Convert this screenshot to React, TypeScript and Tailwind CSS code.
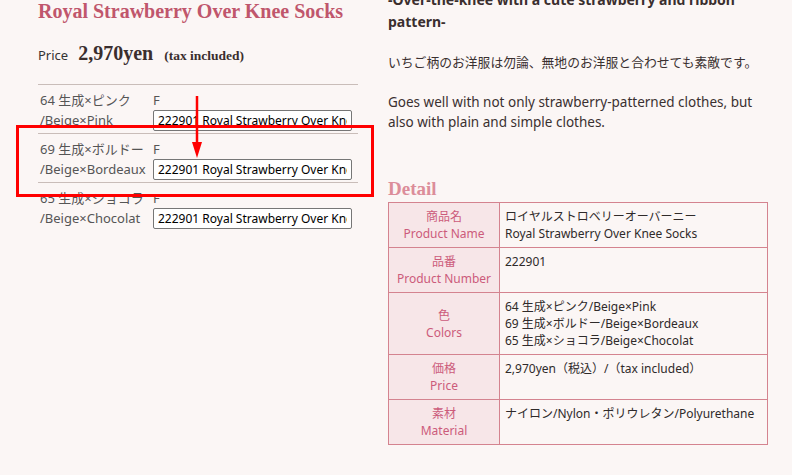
import React from 'react';

const variants = [
  { jp: '64 生成×ピンク', en: '/Beige×Pink' },
  { jp: '69 生成×ボルドー', en: '/Beige×Bordeaux' },
  { jp: '65 生成×ショコラ', en: '/Beige×Chocolat' },
];

const details: { jp: string; en: string; lines: string[] }[] = [
  { jp: '商品名', en: 'Product Name', lines: ['ロイヤルストロベリーオーバーニー', 'Royal Strawberry Over Knee Socks'] },
  { jp: '品番', en: 'Product Number', lines: ['222901'] },
  {
    jp: '色',
    en: 'Colors',
    lines: ['64 生成×ピンク/Beige×Pink', '69 生成×ボルドー/Beige×Bordeaux', '65 生成×ショコラ/Beige×Chocolat'],
  },
  { jp: '価格', en: 'Price', lines: ['2,970yen（税込）/（tax included）'] },
  { jp: '素材', en: 'Material', lines: ['ナイロン/Nylon・ポリウレタン/Polyurethane'] },
];

const sans = "font-['Noto_Sans','Noto_Sans_CJK_JP',sans-serif]";
const serif = "font-['Liberation_Serif','Noto_Sans_CJK_JP',serif]";

const App: React.FC = () => {
  return (
    <div className={`w-[792px] h-[475px] overflow-hidden bg-[#fbf6f5] text-[#3a3030] ${sans}`}>
      <div className="flex pl-[38px] gap-[30px]">
        {/* left column */}
        <div className="relative w-[320px] shrink-0">
          <h1 className={`${serif} font-bold text-[20px] leading-[24px] text-[#c0566c] -mt-[1px]`}>
            Royal Strawberry Over Knee Socks
          </h1>
          <div className="flex items-baseline mt-[15px] h-[28px]">
            <span className="text-[13px] text-[#333]">Price</span>
            <span className={`${serif} font-bold text-[20px] ml-[10px] text-[#3a2e2e]`}>2,970yen</span>
            <span className={`${serif} font-bold text-[13.5px] ml-[11px] text-[#3a2e2e]`}>(tax included)</span>
          </div>
          <div className="mt-[18px] border-t border-[#c9bdb9]">
            {variants.map((v) => (
              <div key={v.en} className="flex border-b border-[#c9bdb9] pt-[5px] pb-[2px] last:border-b-0">
                <div className="w-[115px] pl-[2px] text-[13px] leading-[20px] text-[#555]">
                  <div>{v.jp}</div>
                  <div>{v.en}</div>
                </div>
                <div className="flex flex-col">
                  <div className="text-[13px] leading-[20px] text-[#555]">F</div>
                  <input
                    readOnly
                    value="222901 Royal Strawberry Over Knee Socks"
                    className="w-[199px] h-[21px] border border-[#767676] bg-white px-[4px] text-[12px] text-black rounded-[2px] outline-none"
                  />
                </div>
              </div>
            ))}
          </div>
          {/* annotation overlay */}
          <div className="absolute left-[-22px] top-[125px] w-[358px] h-[72px] border-[3px] border-[#ff0000]" />
          <svg className="absolute left-[152px] top-[96px]" width="14" height="64" viewBox="0 0 14 64">
            <line x1="7" y1="0" x2="7" y2="50" stroke="#ff0000" strokeWidth="2.5" />
            <polygon points="2,46 12,46 7,62" fill="#ff0000" />
          </svg>
        </div>

        {/* right column */}
        <div className="w-[380px] shrink-0 -mt-[11px]">
          <p className="font-bold text-[14px] leading-[22px] text-[#3a2e2e]">
            -Over-the-knee with a cute strawberry and ribbon pattern-
          </p>
          <p className="mt-[19px] text-[12.8px] leading-[20px]">いちご柄のお洋服は勿論、無地のお洋服と合わせても素敵です。</p>
          <p className="mt-[20px] text-[13.5px] leading-[20px]">
            Goes well with not only strawberry-patterned clothes, but also with plain and simple clothes.
          </p>
          <h2 className={`${serif} mt-[45px] font-bold text-[19px] leading-[24px] text-[#dc8d9a]`}>Detail</h2>
          <table className="mt-[1px] w-[380px] border-collapse text-[12px] leading-[17px]">
            <tbody>
              {details.map((d) => (
                <tr key={d.en}>
                  <td className="w-[111px] border border-[#d4838f] bg-[#f7e6e8] text-center align-middle py-[5px] text-[#cc5b7b]">
                    <div className="h-[17px]">{d.jp}</div>
                    <div className="h-[17px]">{d.en}</div>
                  </td>
                  <td className="border border-[#d4838f] align-top py-[5px] px-[5px] text-[#2f2a2a]">
                    {d.lines.map((l) => (
                      <div key={l} className="h-[17px]">
                        {l}
                      </div>
                    ))}
                  </td>
                </tr>
              ))}
            </tbody>
          </table>
        </div>
      </div>
    </div>
  );
};

export default App;
